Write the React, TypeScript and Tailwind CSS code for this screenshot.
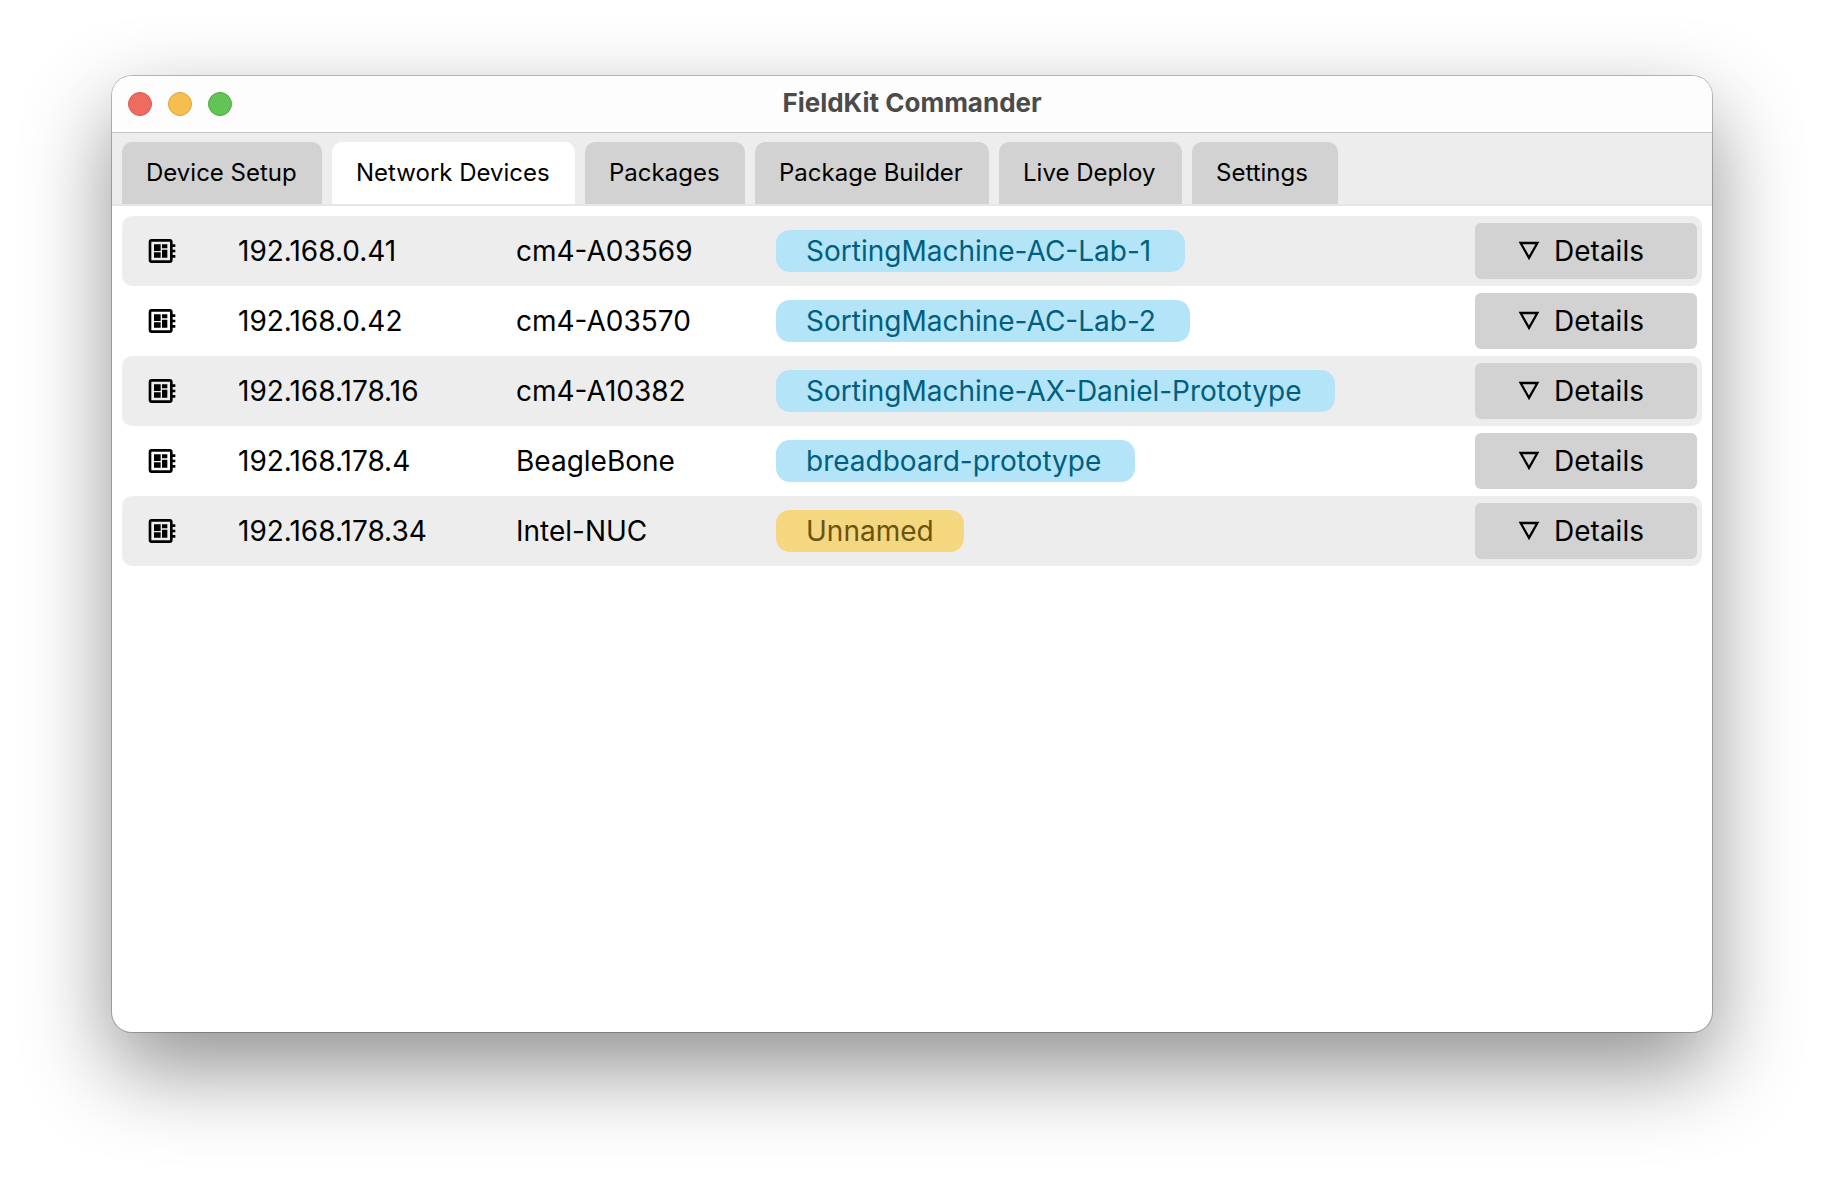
import { useState } from "react";
import { MdDeveloperBoard } from "react-icons/md";

const tabs = [
  { label: "Device Setup", width: "min-w-[200px]" },
  { label: "Network Devices", width: "min-w-[243px]" },
  { label: "Packages", width: "min-w-[160px]" },
  { label: "Package Builder", width: "min-w-[234px]" },
  { label: "Live Deploy", width: "min-w-[183px]" },
  { label: "Settings", width: "min-w-[146px]" },
];

const devices = [
  { ip: "192.168.0.41", host: "cm4-A03569", name: "SortingMachine-AC-Lab-1" },
  { ip: "192.168.0.42", host: "cm4-A03570", name: "SortingMachine-AC-Lab-2" },
  { ip: "192.168.178.16", host: "cm4-A10382", name: "SortingMachine-AX-Daniel-Prototype" },
  { ip: "192.168.178.4", host: "BeagleBone", name: "breadboard-prototype" },
  { ip: "192.168.178.34", host: "Intel-NUC", name: null },
];

function TitleBar() {
  return (
    <header className="grid h-[57px] grid-cols-3 items-center border-b border-[#c4c4c4] bg-[#fdfdfd] px-4">
      <div className="flex gap-4">
        <button aria-label="Close" className="size-6 rounded-full border border-[#d9594c] bg-[#ee6b5f]" />
        <button aria-label="Minimize" className="size-6 rounded-full border border-[#dda43c] bg-[#f5be4f]" />
        <button aria-label="Zoom" className="size-6 rounded-full border border-[#50a73f] bg-[#61c454]" />
      </div>
      <h1 className="pb-0.5 text-center text-[26px] leading-8 font-bold whitespace-nowrap text-[#4b4b4b]">
        FieldKit Commander
      </h1>
    </header>
  );
}

function NameTag({ name }: { name: string | null }) {
  return (
    <span
      className={
        name
          ? "inline-block rounded-[14px] bg-[#b3e4f8] pr-[34px] pl-[30px] leading-[42px] text-[#005f7f]"
          : "inline-block rounded-[14px] bg-[#f5d77f] px-[30px] leading-[42px] text-[#6b5310]"
      }
    >
      {name ?? "Unnamed"}
    </span>
  );
}

function DetailsButton() {
  return (
    <button className="flex h-14 w-full items-center justify-center gap-[14px] rounded-md bg-[#d2d2d2] pr-[10px]">
      <svg viewBox="0 0 22 20" className="h-5 w-[22px]" fill="none" stroke="currentColor" strokeWidth="2.3" aria-hidden="true">
        <path d="M2.6 2h16.8L11 16.8z" />
      </svg>
      Details
    </button>
  );
}

export default function App() {
  const [active, setActive] = useState("Network Devices");

  return (
    <div className="flex min-h-screen flex-col bg-white px-28 pt-19 pb-37 font-['Inter',sans-serif] text-black">
      <main className="flex flex-1 flex-col overflow-hidden rounded-[20px] bg-white shadow-[0_0_0_1px_rgba(0,0,0,0.24),0_36px_88px_rgba(0,0,0,0.44)]">
        <TitleBar />
        <nav role="tablist" className="flex gap-[10px] border-b-2 border-[#e6e6e6] bg-[#ededed] px-[10px] pt-[9px]">
          {tabs.map(({ label, width }) => (
            <button
              key={label}
              role="tab"
              aria-selected={label === active}
              onClick={() => setActive(label)}
              className={`h-[62px] rounded-t-[10px] pl-6 text-left text-2xl whitespace-nowrap ${width} ${
                label === active ? "bg-white" : "bg-[#d2d2d2]"
              }`}
            >
              {label}
            </button>
          ))}
        </nav>
        <div className="p-[10px]">
          <table className="w-full table-fixed text-left text-[28px] leading-[42px]">
            <colgroup>
              <col className="w-[116px]" />
              <col className="w-[278px]" />
              <col className="w-[260px]" />
              <col />
              <col className="w-[227px]" />
            </colgroup>
            <tbody>
              {devices.map((d) => (
                <tr key={d.ip} className="h-[70px] odd:*:bg-[#ededed]">
                  <td className="rounded-l-[10px] p-0 pl-6">
                    <MdDeveloperBoard className="size-8" aria-hidden="true" />
                  </td>
                  <td className="p-0">{d.ip}</td>
                  <td className="p-0">{d.host}</td>
                  <td className="p-0">
                    <NameTag name={d.name} />
                  </td>
                  <td className="rounded-r-[10px] p-0 pr-[5px]">
                    <DetailsButton />
                  </td>
                </tr>
              ))}
            </tbody>
          </table>
        </div>
      </main>
    </div>
  );
}
